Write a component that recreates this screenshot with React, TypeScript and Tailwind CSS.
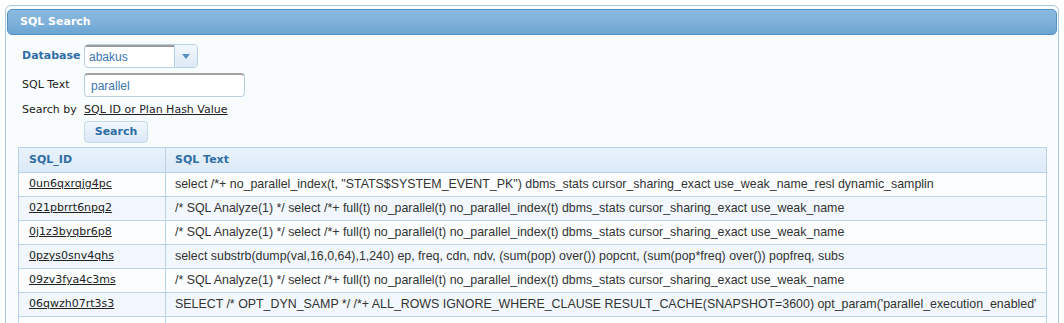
import React from "react";

const rows: [string, string][] = [
  ["0un6qxrqjg4pc", 'select /*+ no_parallel_index(t, "STATS$SYSTEM_EVENT_PK") dbms_stats cursor_sharing_exact use_weak_name_resl dynamic_samplin'],
  ["021pbrrt6npq2", "/* SQL Analyze(1) */ select /*+ full(t) no_parallel(t) no_parallel_index(t) dbms_stats cursor_sharing_exact use_weak_name"],
  ["0j1z3byqbr6p8", "/* SQL Analyze(1) */ select /*+ full(t) no_parallel(t) no_parallel_index(t) dbms_stats cursor_sharing_exact use_weak_name"],
  ["0pzys0snv4qhs", "select substrb(dump(val,16,0,64),1,240) ep, freq, cdn, ndv, (sum(pop) over()) popcnt, (sum(pop*freq) over()) popfreq, subs"],
  ["09zv3fya4c3ms", "/* SQL Analyze(1) */ select /*+ full(t) no_parallel(t) no_parallel_index(t) dbms_stats cursor_sharing_exact use_weak_name"],
  ["06qwzh07rt3s3", "SELECT /* OPT_DYN_SAMP */ /*+ ALL_ROWS IGNORE_WHERE_CLAUSE RESULT_CACHE(SNAPSHOT=3600) opt_param('parallel_execution_enabled'"],
  ["", ""],
];

export default function App() {
  return (
    <div className="w-[1064px] h-[323px] overflow-hidden bg-white font-['DejaVu_Sans',Verdana,sans-serif] text-[11px] text-[#222]">
      <div className="mt-[5px] ml-[5px] w-[1054px] h-[340px] border border-[#a9c8e2] rounded-t-[6px] bg-[#f9fcfd] px-[1px] pt-[3px]">
        <div className="h-[26px] rounded-[5px] border border-[#4f92ca] bg-gradient-to-b from-[#8cb9de] via-[#7fb1da] to-[#6aa5d1] flex items-center pl-[12px] text-white font-bold text-[11px]">
          SQL Search
        </div>
        <div className="pl-[14px] pt-[9px]">
          <div className="flex items-center h-[24px]">
            <div className="w-[63px] font-bold text-[#2f6ea5] pl-[1px]">Database</div>
            <div className="w-[114px] h-[24px] rounded-[4px] border border-[#b7d1e7] bg-white flex overflow-hidden">
              <div className="flex-1 flex items-center pl-[4px] text-[#3a75b0] border-t-2 border-t-[#9a9a9a] text-[12px] font-['Liberation_Sans',Arial,sans-serif]">
                abakus
              </div>
              <div className="w-[23px] border-l border-[#b7d1e7] bg-gradient-to-b from-[#f2f7fc] to-[#dde9f5] flex items-center justify-center">
                <svg width="8" height="5" viewBox="0 0 8 5">
                  <path d="M0 0 L8 0 L4 5 Z" fill="#5b8fc3" />
                </svg>
              </div>
            </div>
          </div>
          <div className="flex items-center h-[24px] mt-[5px]">
            <div className="w-[63px] pl-[1px]">SQL Text</div>
            <div className="w-[161px] h-[24px] rounded-[4px] border border-[#b7d1e7] border-t-2 border-t-[#a3a3a3] bg-white flex items-center pl-[6px] text-[#3a75b0] text-[12px] font-['Liberation_Sans',Arial,sans-serif]">
              parallel
            </div>
          </div>
          <div className="flex items-center h-[16px] mt-[5px]">
            <div className="w-[63px] pl-[1px]">Search by</div>
            <span className="underline">SQL ID or Plan Hash Value</span>
          </div>
          <div className="flex mt-[3px] pl-[63px]">
            <button className="w-[64px] h-[22px] rounded-[4px] border border-[#c3d9ed] bg-gradient-to-b from-[#f1f7fd] to-[#dbe8f6] font-bold text-[#2f6ea5] text-[11px]">
              Search
            </button>
          </div>
        </div>
        <div className="pl-[11px] pt-[4px]">
          <table className="w-[1029px] border-collapse">
            <thead>
              <tr className="h-[25px] bg-gradient-to-b from-[#e9f2fb] to-[#dbe9f7]">
                <th className="w-[147px] border border-[#b9d2e7] text-left pl-[10px] pt-[1px] font-bold text-[#2f6ea5]">SQL_ID</th>
                <th className="border border-[#b9d2e7] text-left pl-[9px] pt-[1px] font-bold text-[#2f6ea5]">SQL Text</th>
              </tr>
            </thead>
            <tbody>
              {rows.map(([id, text], i) => (
                <tr key={i} className={i % 2 === 0 ? "h-[24px] bg-[#fbfdfe]" : "h-[24px] bg-[#f1f7fc]"}>
                  <td className="border border-[#b9d2e7] pl-[10px] underline text-[#222]">{id}</td>
                  <td className="border border-[#b9d2e7] pl-[9px] text-[#333] text-[12.4px] font-['Liberation_Sans',Arial,sans-serif] whitespace-nowrap">{text}</td>
                </tr>
              ))}
            </tbody>
          </table>
        </div>
      </div>
    </div>
  );
}
